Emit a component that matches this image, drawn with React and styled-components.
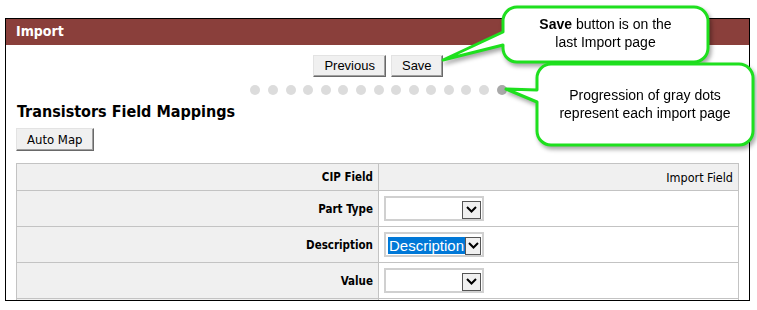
import React from "react"
import styled, { createGlobalStyle } from "styled-components"

const GlobalStyle = createGlobalStyle`
    html, body {
        margin: 0;
        padding: 0;
        background: #fff;
    }
    * {
        box-sizing: border-box;
    }
`

const TAHOMA = `"DejaVu Sans Condensed", "DejaVu Sans", sans-serif`
const ARIAL = `"Liberation Sans", Arial, sans-serif`

const fields = [
    { label: "Part Type", value: "" },
    { label: "Description", value: "Description" },
    { label: "Value", value: "" },
    { label: "", value: "" },
]

const Chevron = () => (
    <svg width="11" height="7" viewBox="0 0 11 7">
        <path d="M1 1 L5.5 5.5 L10 1" fill="none" stroke="#000" strokeWidth="2" />
    </svg>
)

const FakeSelect = ({ value }) => (
    <SelectBox>
        <SelectText>{value && <Selected>{value}</Selected>}</SelectText>
        <DropButton>
            <Chevron />
        </DropButton>
    </SelectBox>
)

const CalloutOne = () => (
    <CalloutWrap style={{ left: 440, top: 4, width: 272, height: 64 }}>
        <svg width="272" height="64">
            <path
                d="M77 3 H254 A14 14 0 0 1 268 17 V44 A14 14 0 0 1 254 58 H77 A14 14 0 0 1 63 44 V41 L3 56 L63 28 V17 A14 14 0 0 1 77 3 Z"
                fill="#fff"
                stroke="#1ee01e"
                strokeWidth="3"
                strokeLinejoin="round"
            />
        </svg>
        <CalloutText style={{ left: 63, top: 11, width: 205 }}>
            <b>Save</b> button is on the
            <br />
            last Import page
        </CalloutText>
    </CalloutWrap>
)

const CalloutTwo = () => (
    <CalloutWrap style={{ left: 503, top: 60, width: 254, height: 90 }}>
        <svg width="254" height="90">
            <path
                d="M48 4 H236 A14 14 0 0 1 250 18 V71 A14 14 0 0 1 236 85 H48 A14 14 0 0 1 34 71 V42 L3 29 L34 30 V18 A14 14 0 0 1 48 4 Z"
                fill="#fff"
                stroke="#1ee01e"
                strokeWidth="3"
                strokeLinejoin="round"
            />
        </svg>
        <CalloutText style={{ left: 34, top: 26, width: 216 }}>
            Progression of gray dots
            <br />
            represent each import page
        </CalloutText>
    </CalloutWrap>
)

export default function App() {
    const dots = Array.from({ length: 15 })

    return (
        <Page>
            <GlobalStyle />
            <Frame>
                <Header>Import</Header>
                <Content>
                    <NavRow>
                        <PushButton>Previous</PushButton>
                        <PushButton>Save</PushButton>
                    </NavRow>
                    <Dots>
                        {dots.map((_, i) => (
                            <Dot key={i} current={i === dots.length - 1} />
                        ))}
                    </Dots>
                    <Title>Transistors Field Mappings</Title>
                    <AutoMapButton>Auto Map</AutoMapButton>
                    <Table>
                        <tbody>
                            <tr>
                                <HeadCell>CIP Field</HeadCell>
                                <HeadCell light>Import Field</HeadCell>
                            </tr>
                            {fields.map((f, i) => (
                                <tr key={i}>
                                    <LabelCell>{f.label}</LabelCell>
                                    <InputCell>
                                        <FakeSelect value={f.value} />
                                    </InputCell>
                                </tr>
                            ))}
                        </tbody>
                    </Table>
                </Content>
            </Frame>
            <CalloutOne />
            <CalloutTwo />
        </Page>
    )
}

const Page = styled.div`
    position: relative;
    width: 757px;
    height: 310px;
    padding: 18px 0 0 5px;
    overflow: hidden;
`

const Frame = styled.div`
    width: 745px;
    height: 283px;
    border: 1px solid #000;
    overflow: hidden;
`

const Header = styled.div`
    height: 26px;
    background: #8a3f3b;
    color: #fff;
    font-family: ${TAHOMA};
    font-weight: bold;
    font-size: 14px;
    line-height: 25px;
    padding-left: 10px;
`

const Content = styled.div`
    padding: 0 9px 0 10px;
`

const NavRow = styled.div`
    display: flex;
    justify-content: center;
    gap: 5px;
    margin-top: 10px;
`

const PushButton = styled.button`
    font-family: ${ARIAL};
    font-size: 13px;
    height: 22px;
    padding: 0 10px 1px;
    background: #f0f0f0;
    color: #000;
    border: 1px solid #e3e3e3;
    border-right-color: #696969;
    border-bottom-color: #696969;
    box-shadow: inset -1px -1px 0 #a0a0a0;
    border-radius: 0;
`

const Dots = styled.div`
    display: flex;
    justify-content: center;
    gap: 7.6px;
    margin-top: 8px;
    padding-left: 1px;
`

const Dot = styled.span`
    width: 10px;
    height: 10px;
    border-radius: 50%;
    background: ${({ current }) => (current ? "#a9a9a9" : "#dcdcdc")};
`

const Title = styled.h2`
    margin: 7px 0 0 1px;
    font-family: ${TAHOMA};
    font-size: 16px;
    font-weight: bold;
    line-height: 20px;
    color: #000;
`

const AutoMapButton = styled(PushButton)`
    font-family: ${TAHOMA};
    margin-top: 6px;
    height: 23px;
    padding: 0 10px 1px;
`

const Table = styled.table`
    margin-top: 12px;
    width: 723px;
    border-collapse: collapse;
    font-family: ${TAHOMA};
    font-size: 11.5px;
    color: #000;

    td {
        border: 1px solid #c3c3c3;
    }
`

const HeadCell = styled.td`
    height: 27px;
    background: #f0f0f0;
    text-align: right;
    padding: 0 5px;
    font-size: ${({ light }) => (light ? "12.5px" : "11.5px")};
    font-weight: ${({ light }) => (light ? "normal" : "bold")};

    &:first-child {
        width: 362px;
    }
`

const LabelCell = styled.td`
    height: 36px;
    background: #f0f0f0;
    text-align: right;
    font-weight: bold;
    padding: 0 5px;
`

const InputCell = styled.td`
    height: 36px;
    background: #fff;
    padding: 0 5px;
`

const SelectBox = styled.div`
    width: 100px;
    height: 25px;
    border: 2px solid #d0d0d0;
    display: flex;
    align-items: center;
    justify-content: space-between;
    padding: 2px 1px 0 2px;
`

const SelectText = styled.div`
    flex: 1;
    font-family: ${ARIAL};
    font-size: 15px;
    line-height: 17px;
`

const Selected = styled.span`
    background: #0078d7;
    color: #fff;
    padding: 0 1px;
`

const DropButton = styled.div`
    width: 19px;
    height: 18px;
    border: 1px solid #555;
    background: #f0f0f0;
    display: flex;
    align-items: center;
    justify-content: center;
`

const CalloutWrap = styled.div`
    position: absolute;
    filter: drop-shadow(2px 3px 2px rgba(0, 0, 0, 0.35));

    svg {
        display: block;
    }
`

const CalloutText = styled.div`
    position: absolute;
    text-align: center;
    font-family: ${ARIAL};
    font-size: 14px;
    line-height: 18px;
    color: #000;
`
